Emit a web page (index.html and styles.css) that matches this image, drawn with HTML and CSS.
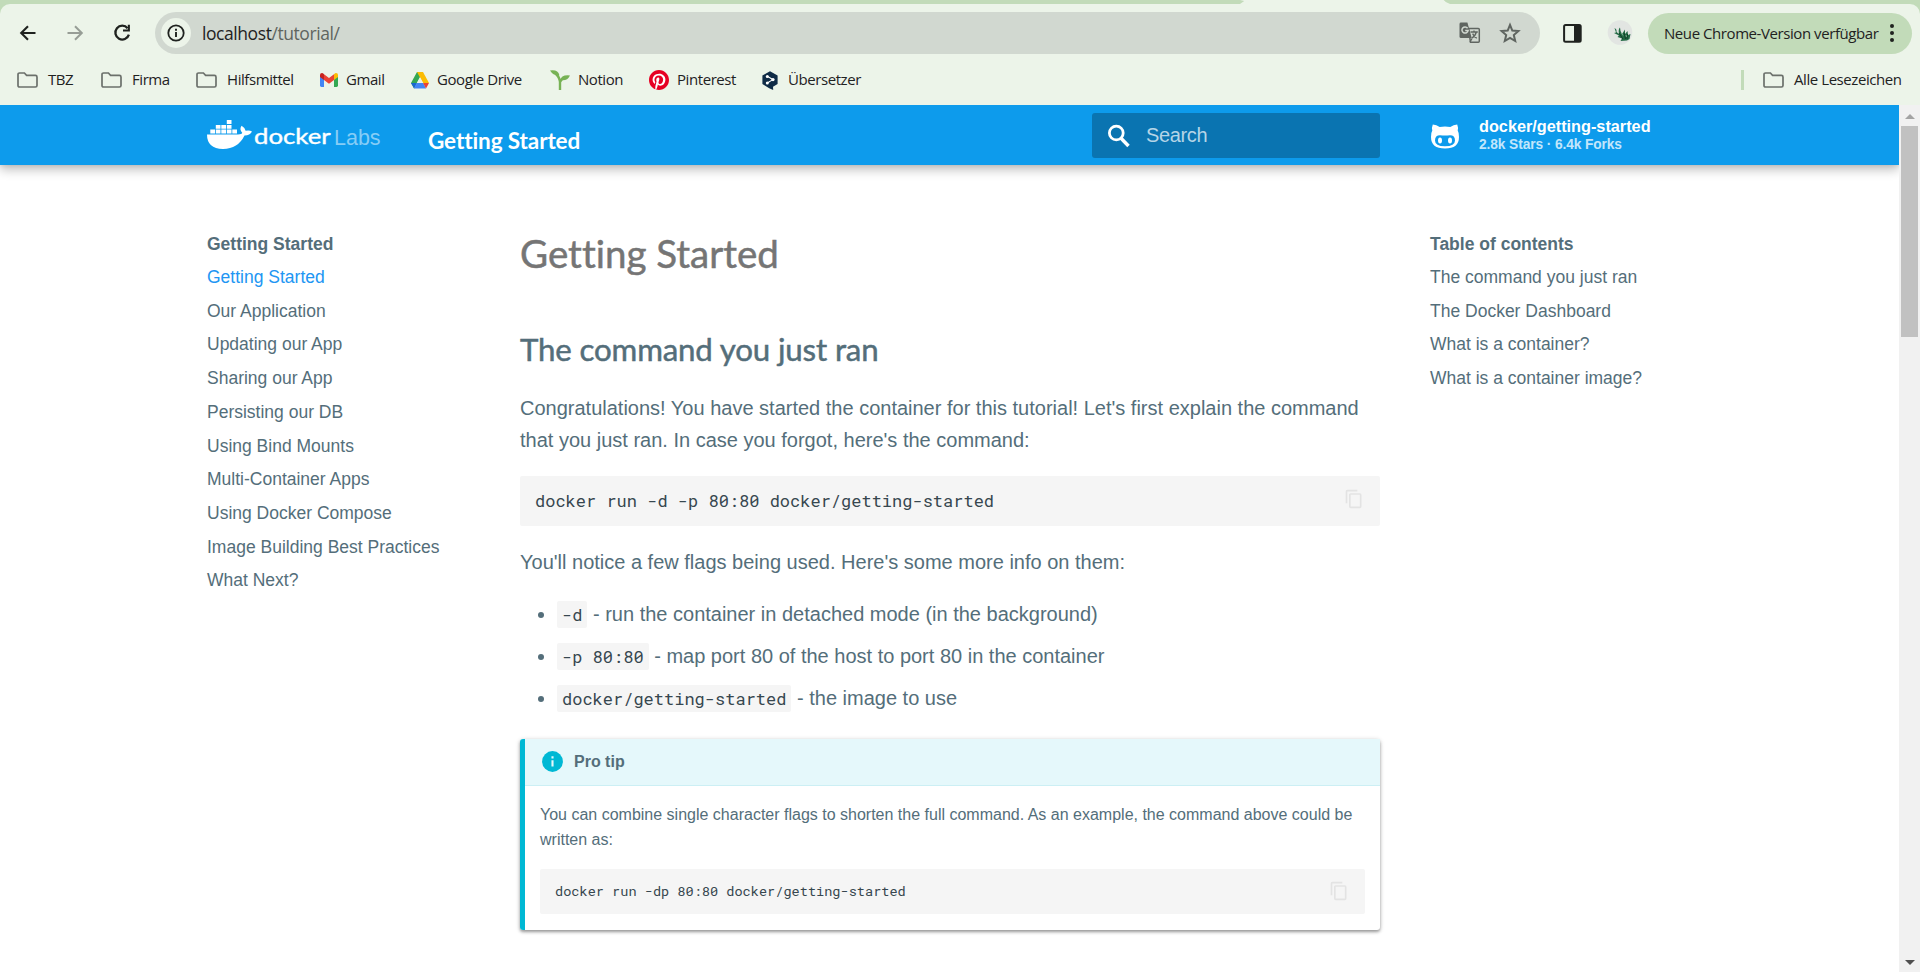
FILE: index.html
```html
<!DOCTYPE html>
<html lang="en">
<head>
<meta charset="utf-8">
<title>Getting Started</title>
<link rel="stylesheet" href="styles.css">
</head>
<body>
<svg class="defs" width="0" height="0">
  <symbol id="folder" viewBox="0 0 21 16"><path d="M1 2.6Q1 1 2.6 1H7.4L9.6 3.3H18.4Q20 3.3 20 4.9V13.4Q20 15 18.4 15H2.6Q1 15 1 13.4Z" fill="none" stroke="#6b706b" stroke-width="1.7"/></symbol>
  <symbol id="copy" viewBox="0 0 24 24"><path fill="#e3e3e3" d="M19 21H8V7h11m0-2H8a2 2 0 0 0-2 2v14a2 2 0 0 0 2 2h11a2 2 0 0 0 2-2V7a2 2 0 0 0-2-2m-3-4H4a2 2 0 0 0-2 2v14h2V3h12V1z"/></symbol>
</svg>
<div class="tabstrip"><div class="active-tab"></div></div>
<div class="chrome-bg">
<div class="chrome">
  <div class="toolbar">
    <svg class="nav-ic" width="20" height="20" viewBox="0 0 20 20"><path d="M17.5 10H4M10 3.2L3.2 10L10 16.8" fill="none" stroke="#1f221f" stroke-width="2.1"/></svg>
    <svg class="nav-ic" width="20" height="20" viewBox="0 0 20 20"><path d="M2.5 10H16M10 3.2L16.8 10L10 16.8" fill="none" stroke="#979d96" stroke-width="2"/></svg>
    <svg class="nav-ic" width="20" height="20" viewBox="0 0 20 20"><path d="M15.6 5.2A6.9 6.9 0 1 0 16.9 11.6" fill="none" stroke="#1f221f" stroke-width="2.3"/><path d="M17.9 1.8V8.6H11V6.5H15.8V1.8Z" fill="#1f221f"/></svg>
    <div class="omnibox">
      <span class="site-info"><svg width="18" height="18" viewBox="0 0 18 18"><circle cx="9" cy="9" r="7.7" fill="none" stroke="#1f221f" stroke-width="1.8"/><path d="M9 8V13M9 4.8V6.7" stroke="#1f221f" stroke-width="1.9"/></svg></span>
      <span class="url"><span class="host">localhost</span>/tutorial/</span>
      <svg class="translate" width="22" height="22" viewBox="0 0 22 22"><path d="M9.5 6.5H19.3Q20.3 6.5 20.3 7.5V19.3Q20.3 20.3 19.3 20.3H11.5Z" fill="none" stroke="#5f6560" stroke-width="1.5"/><path d="M2 .6H8.4L12.7 16H2Q.5 16 .5 14.5V2Q.5 .6 2 .6Z" fill="#5f6560"/><path d="M8.6 6.2A3.1 3.1 0 1 0 9.1 8.6H6.2" fill="none" stroke="#d1d8d0" stroke-width="1.5"/><path d="M11.5 10H18.8M15 8.5V10M17.3 10Q16.5 14 12.8 16M13.6 11.6Q15 14.5 17.8 16.3M11 20L13 16.5" fill="none" stroke="#5f6560" stroke-width="1.3"/></svg>
      <svg class="star" width="22" height="22" viewBox="0 0 22 22"><path d="M11 2.8L13.3 8.5L19.4 9L14.8 13L16.2 19L11 15.8L5.8 19L7.2 13L2.6 9L8.7 8.5Z" fill="none" stroke="#5f6560" stroke-width="2"/></svg>
    </div>
    <svg class="panel" width="19" height="19" viewBox="0 0 19 19"><rect x="1.1" y="1.1" width="16.6" height="16.6" rx="1.5" fill="none" stroke="#1f221f" stroke-width="2"/><path d="M11 1H18V18H11Z" fill="#1f221f"/></svg>
    <svg class="avatar" width="26" height="26" viewBox="0 0 26 26"><circle cx="13" cy="12.500" r="12.300" fill="#e2e5e2"/><path d="M7.500 8Q10 9 9.500 12L12 14Q11 9 13 7.500Q13 11 15 14L18 9.500V14L20.500 11L21 15L23.500 14L22.500 19L20 20.500L13.500 21L15 18.500L10.500 17L12 15.500L7 13L9 12.500Z" fill="#246b46"/><path d="M12 13L16 19M17 13L18.500 19M20.500 14L20 19" fill="none" stroke="#123f29" stroke-width="1"/><path d="M14.500 13L16 15.500M19 15L19.500 17" stroke="#7fb894" stroke-width=".9"/></svg>
    <div class="update"><span class="update-text">Neue Chrome-Version verfügbar</span><svg width="6" height="20" viewBox="0 0 6 20"><g fill="#1f221f"><circle cx="3" cy="3" r="2"/><circle cx="3" cy="10" r="2"/><circle cx="3" cy="17" r="2"/></g></svg></div>
  </div>
  <div class="bookmarks">
    <span class="bm"><svg width="21" height="16"><use href="#folder"/></svg><b>TBZ</b></span>
    <span class="bm"><svg width="21" height="16"><use href="#folder"/></svg><b>Firma</b></span>
    <span class="bm"><svg width="21" height="16"><use href="#folder"/></svg><b>Hilfsmittel</b></span>
    <span class="bm site"><svg width="18" height="14" viewBox="0 0 18 14"><path d="M0 2V12.6Q0 14 1.4 14H4V6Z" fill="#4285f4"/><path d="M18 2V12.6Q18 14 16.6 14H14V6Z" fill="#34a853"/><path d="M14 1.3V7L18 4V2Q18 0 16 0Q15.2 0 14 1.3Z" fill="#fbbc04"/><path d="M0 2Q0 0 2 0Q2.8 0 4 1.3V7L0 4Z" fill="#c5221f"/><path d="M4 1.3L9 5L14 1.3V7L9 10.7L4 7Z" fill="#ea4335"/></svg><b>Gmail</b></span>
    <span class="bm site"><svg width="18" height="17" viewBox="0 0 18 17"><path d="M6 0H12L9 5.2L3 16.5L0 11Z" fill="#34a853"/><path d="M6 0H12L18 11H12Z" fill="#fbbc04"/><path d="M0 11H5.8L3.2 16.5Z" fill="#1967d2"/><path d="M5.8 11H12.2L15 16.6H3Z" fill="#4285f4"/><path d="M12 11H18L15 16.5Z" fill="#ea4335"/><path d="M9 5.2L12.2 11H5.8Z" fill="#ecf4e9"/></svg><b>Google Drive</b></span>
    <span class="bm site"><svg width="20" height="20" viewBox="0 0 20 20"><path d="M10 20V12Q9.5 7 5.5 3.5M10 12Q11 9.5 14 7.5" fill="none" stroke="#77b255" stroke-width="2.4"/><path d="M0 .5Q8-.8 9.4 5.2Q4 6.5 0 .5ZM10.5 10Q11 4.5 20 5.4Q17 11.5 10.5 10Z" fill="#77b255"/></svg><b>Notion</b></span>
    <span class="bm site"><svg width="20" height="20" viewBox="0 0 24 24"><circle cx="12" cy="12" r="11" fill="#fff"/><path fill="#e60023" d="M12 0C5.373 0 0 5.372 0 12c0 5.084 3.163 9.426 7.627 11.174-.105-.949-.2-2.405.042-3.441.218-.937 1.407-5.965 1.407-5.965s-.359-.719-.359-1.782c0-1.668.967-2.914 2.171-2.914 1.023 0 1.518.769 1.518 1.69 0 1.029-.655 2.568-.994 3.995-.283 1.194.599 2.169 1.777 2.169 2.133 0 3.772-2.249 3.772-5.495 0-2.873-2.064-4.882-5.012-4.882-3.414 0-5.418 2.561-5.418 5.207 0 1.031.397 2.138.893 2.738a.36.36 0 0 1 .083.345l-.333 1.36c-.053.22-.174.267-.402.161-1.499-.698-2.436-2.889-2.436-4.649 0-3.785 2.75-7.262 7.929-7.262 4.163 0 7.398 2.967 7.398 6.931 0 4.136-2.607 7.464-6.227 7.464-1.216 0-2.359-.631-2.75-1.378l-.748 2.853c-.271 1.043-1.002 2.35-1.492 3.146 1.124.347 2.317.535 3.554.535 6.627 0 12-5.373 12-12S18.627 0 12 0z"/></svg><b>Pinterest</b></span>
    <span class="bm"><svg width="16" height="19" viewBox="0 0 16 19"><path d="M8 .2L15.6 4.4V13L11 15.8L11.2 19L7.2 17.2L.4 13V4.4Z" fill="#0f2b46"/><path d="M5.3 5.3L10.8 8.6L5.3 12" fill="none" stroke="#fff" stroke-width="1.1"/><g fill="#fff"><circle cx="5.3" cy="5.4" r="1.5"/><circle cx="11" cy="8.6" r="1.6"/><circle cx="5.3" cy="12" r="1.5"/></g></svg><b>Übersetzer</b></span>
    <i class="bm-sep"></i>
    <span class="bm"><svg width="21" height="16"><use href="#folder"/></svg><b>Alle Lesezeichen</b></span>
  </div>
</div>
</div>
<div class="viewport">
  <div class="page">
    <header class="header">
      <div class="logo">
        <svg width="46" height="30" viewBox="0 0 46 30"><g fill="#fff"><path d="M0 14.4H30.5Q35 14.5 35.2 12.8Q32 9.5 34.6 5.8Q38.3 8 38.6 10.8Q42.5 9.8 45 11.6Q43 15.6 37.5 15.6Q31 29 16 29Q0 28.500 0 14.400Z"/><path d="M3.300 9.500h4.700v4h-4.700zM8.800 9.500h4.700v4H8.800zM14.300 9.500h4.700v4h-4.700zM19.800 9.500h4.700v4h-4.700zM25.300 9.500h4.700v4h-4.700zM8.800 4.900h4.700v3.800H8.800zM14.300 4.900h4.700v3.800h-4.700zM19.800 4.900h4.700v3.800h-4.700zM19.800 0h4.700v4h-4.700z"/></g></svg>
        <span class="word">docker</span><span class="labs">Labs</span>
      </div>
      <div class="site-title">Getting Started</div>
      <div class="search"><svg width="24" height="24" viewBox="0 0 24 24"><circle cx="9.300" cy="9" r="6.900" fill="none" stroke="#fff" stroke-width="2.800"/><path d="M13.800 14L21.500 22" stroke="#fff" stroke-width="3.400"/></svg><span>Search</span></div>
      <div class="source">
        <svg width="28" height="25" viewBox="0 0 28 25"><path fill="#fff" fill-rule="evenodd" d="M1.800.5Q5.500.700 8.700 3Q14 2 19.300 3Q22.500.700 26.200.500Q27.500 3.500 26.700 6.500Q28 8.500 28 13Q28 24.500 14 24.500Q0 24.500 0 13Q0 8.500 1.300 6.500Q.5 3.500 1.800.5ZM9 11.200Q4 11.200 4 16.500Q4 22.300 14 22.300Q24 22.300 24 16.500Q24 11.200 19 11.200Q14 12 9 11.200Z"/><ellipse cx="9" cy="16.400" rx="2" ry="3" fill="#fff"/><ellipse cx="19" cy="16.400" rx="2" ry="3" fill="#fff"/></svg>
        <div class="repo"><div>docker/getting-started</div><div class="facts">2.8k Stars · 6.4k Forks</div></div>
      </div>
    </header>
    <div class="columns">
      <nav class="side">
        <div class="side-title">Getting Started</div>
        <a class="active">Getting Started</a><a>Our Application</a><a>Updating our App</a><a>Sharing our App</a><a>Persisting our DB</a><a>Using Bind Mounts</a><a>Multi-Container Apps</a><a>Using Docker Compose</a><a>Image Building Best Practices</a><a>What Next?</a>
      </nav>
      <main class="content">
        <h1>Getting Started</h1>
        <h2>The command you just ran</h2>
        <p>Congratulations! You have started the container for this tutorial! Let's first explain the command<br>that you just ran. In case you forgot, here's the command:</p>
        <div class="code"><code>docker run -d -p 80:80 docker/getting-started</code><svg width="20" height="20"><use href="#copy"/></svg></div>
        <p>You'll notice a few flags being used. Here's some more info on them:</p>
        <ul>
          <li><code>-d</code> - run the container in detached mode (in the background)</li>
          <li><code>-p 80:80</code> - map port 80 of the host to port 80 in the container</li>
          <li><code>docker/getting-started</code> - the image to use</li>
        </ul>
        <div class="tip">
          <div class="tip-title"><svg width="21" height="21" viewBox="0 0 21 21"><circle cx="10.500" cy="10.500" r="10.400" fill="#00b8d4"/><path d="M10.500 9.200V15.600M10.500 5.300V7.400" stroke="#e5f8fb" stroke-width="2.100"/></svg><span>Pro tip</span></div>
          <div class="tip-body">
            <p>You can combine single character flags to shorten the full command. As an example, the command above could be<br>written as:</p>
            <div class="code small"><code>docker run -dp 80:80 docker/getting-started</code><svg width="20" height="20"><use href="#copy"/></svg></div>
          </div>
        </div>
      </main>
      <nav class="toc">
        <div class="side-title">Table of contents</div>
        <a>The command you just ran</a><a>The Docker Dashboard</a><a>What is a container?</a><a>What is a container image?</a>
      </nav>
    </div>
  </div>
  <div class="scrollbar"><i class="up"></i><i class="thumb"></i><i class="down"></i></div>
</div>
</body>
</html>
```
FILE: styles.css
```css
* { box-sizing: border-box; }
body { margin: 0; width: 1920px; height: 972px; overflow: hidden; background: #fff; font-family: "Liberation Sans", Arial, sans-serif; }
svg { display: block; flex: none; }
.defs { position: absolute; }
.tabstrip { height: 4px; background: #c2dbb9; }
.active-tab { width: 210px; height: 4px; margin-left: 1240px; background: #ecf4e9; clip-path: polygon(0 100%, 2% 25%, 0 0, 97% 0, 98% 50%, 100% 100%); }
.chrome-bg { background: #c2dbb9; }
.chrome { height: 101px; background: #ecf4e9; border-radius: 10px 10px 0 0; font-family: "Open Sans", "Segoe UI", sans-serif; color: #1f221f; letter-spacing: -.43px; }
.toolbar { display: flex; align-items: center; height: 58px; padding-left: 18px; }
.nav-ic { margin-right: 27px; }
.omnibox { display: flex; align-items: center; width: 1385px; height: 42px; margin-left: -4px; border-radius: 21px; background: #d1d8d0; flex: none; }
.site-info { display: grid; place-items: center; width: 30px; height: 30px; margin-left: 6px; border-radius: 50%; background: #ecf4e9; flex: none; }
.url { width: 1257px; margin-left: 11px; font-size: 17.5px; color: #5f6560; }
.host { color: #1f221f; }
.star { margin-left: 18px; }
.panel { margin-left: 23px; }
.avatar { margin-left: 25px; }
.update { display: flex; align-items: center; width: 264px; height: 41px; margin-left: 15px; padding-left: 16px; border-radius: 21px; background: #c2dbb9; font-size: 15px; flex: none; }
.update-text { width: 214px; white-space: nowrap; }
.update svg { margin-left: 11px; }
.bookmarks { display: grid; grid-template-columns: 84px 95px 124px 91px 139px 99px 113px 979px 22px 1fr; align-items: center; height: 36px; padding-left: 17px; font-size: 15px; }
.bm { display: flex; align-items: center; white-space: nowrap; gap: 10px; }
.bm.site { gap: 8px; }
.bm b { margin-top: -2px; font-weight: 400; }
.bm-sep { width: 3px; height: 20px; background: #c2dbb9; }
.viewport { display: flex; height: 867px; }
.page { width: 1899px; overflow: hidden; }
.header { display: flex; height: 60px; padding-left: 207px; background: #0d9bec; color: #fff; box-shadow: 0 0 5px rgba(0,0,0,.12), 0 5px 10px rgba(0,0,0,.24); }
.logo { display: flex; width: 221px; padding-top: 15px; }
.word { width: 77px; margin: 1px 0 0 1px; font: 22px/30px Lato, sans-serif; -webkit-text-stroke: .4px #fff; transform: scaleX(1.17); transform-origin: left; }
.labs { margin-left: 3px; font-size: 21.500px; line-height: 36px; color: #86cdf6; }
.site-title { width: 664px; padding-top: 21px; font: 700 22.500px/30px Lato, sans-serif; font-variant-ligatures: none; letter-spacing: -.1px; }
.search { display: flex; align-items: center; gap: 15px; width: 288px; height: 45px; margin-top: 8px; padding-left: 15px; border-radius: 3px; background: #0a74b1; color: #b5d5e7; font-size: 20px; letter-spacing: -.35px; }
.source { display: flex; gap: 20px; margin-left: 51px; padding-top: 11px; }
.source svg { margin-top: 8px; }
.repo { font-weight: 700; font-size: 16.250px; line-height: 20px; }
.facts { font-size: 13.750px; line-height: 17px; letter-spacing: -.1px; color: #c2e6fb; }
.columns { display: flex; padding-left: 207px; color: #546e7a; }
.side, .toc { padding-top: 63px; font-size: 17.500px; }
.side { width: 313px; }
.toc { margin-left: 50px; }
.side-title { height: 33px; line-height: 33px; font-weight: 700; }
.side a, .toc a { display: block; line-height: 33.700px; }
.side a.active { color: #2196f3; }
.content { width: 860px; padding-top: 62px; font-size: 20px; line-height: 32px; }
h1, h2 { font-variant-ligatures: none; -webkit-text-stroke: .5px currentColor; }
h1 { margin: 0; font: 400 38.500px/52px Lato, sans-serif; font-variant-ligatures: none; color: #757575; }
h2 { margin: 50px 0 23px; font: 400 31.250px/40px Lato, sans-serif; letter-spacing: -.15px; }
p { margin: 0; white-space: nowrap; }
code { font: 17px/20px "Roboto Mono", "DejaVu Sans Mono", monospace; color: #37474f; }
.code { display: flex; justify-content: space-between; height: 50px; margin: 20px 0; padding: 15px 16px 0 15px; background: #f5f5f5; border-radius: 2px; }
.code svg { margin-top: -2px; }
ul { margin: 20px 0 0; padding: 0 0 0 37px; }
li { height: 32px; margin-bottom: 10px; }
li code { padding: 2px 5px; background: #f5f5f5; border-radius: 2px; }
.tip { height: 191px; margin-top: 25px; border-left: 5px solid #00b8d4; border-radius: 3px; box-shadow: 0 2px 3px rgba(0,0,0,.3), 0 1px 5px rgba(0,0,0,.2); font-size: 16px; line-height: 25px; }
.tip-title { display: flex; align-items: center; gap: 11px; height: 47px; padding: 0 0 2px 17px; background: #e5f8fb; border-bottom: 1px solid #cceff4; font-weight: 700; }
.tip-body { padding: 16px 15px 0; }
.small { height: 45px; margin: 17px 0 0; padding-top: 12px; }
.small svg { margin-top: 0; }
.small code { font-size: 13.600px; }
.scrollbar { display: flex; flex-direction: column; align-items: center; width: 21px; background: #f1f1f1; }
.up { width: 0; height: 0; margin: 9px 0 7px; border: 5px solid transparent; border-top: 0; border-bottom-color: #a3a3a3; }
.thumb { width: 17px; height: 211px; background: #c1c1c1; }
.down { width: 0; height: 0; margin-top: auto; margin-bottom: 7px; border: 5px solid transparent; border-bottom: 0; border-top-color: #505050; }
```
